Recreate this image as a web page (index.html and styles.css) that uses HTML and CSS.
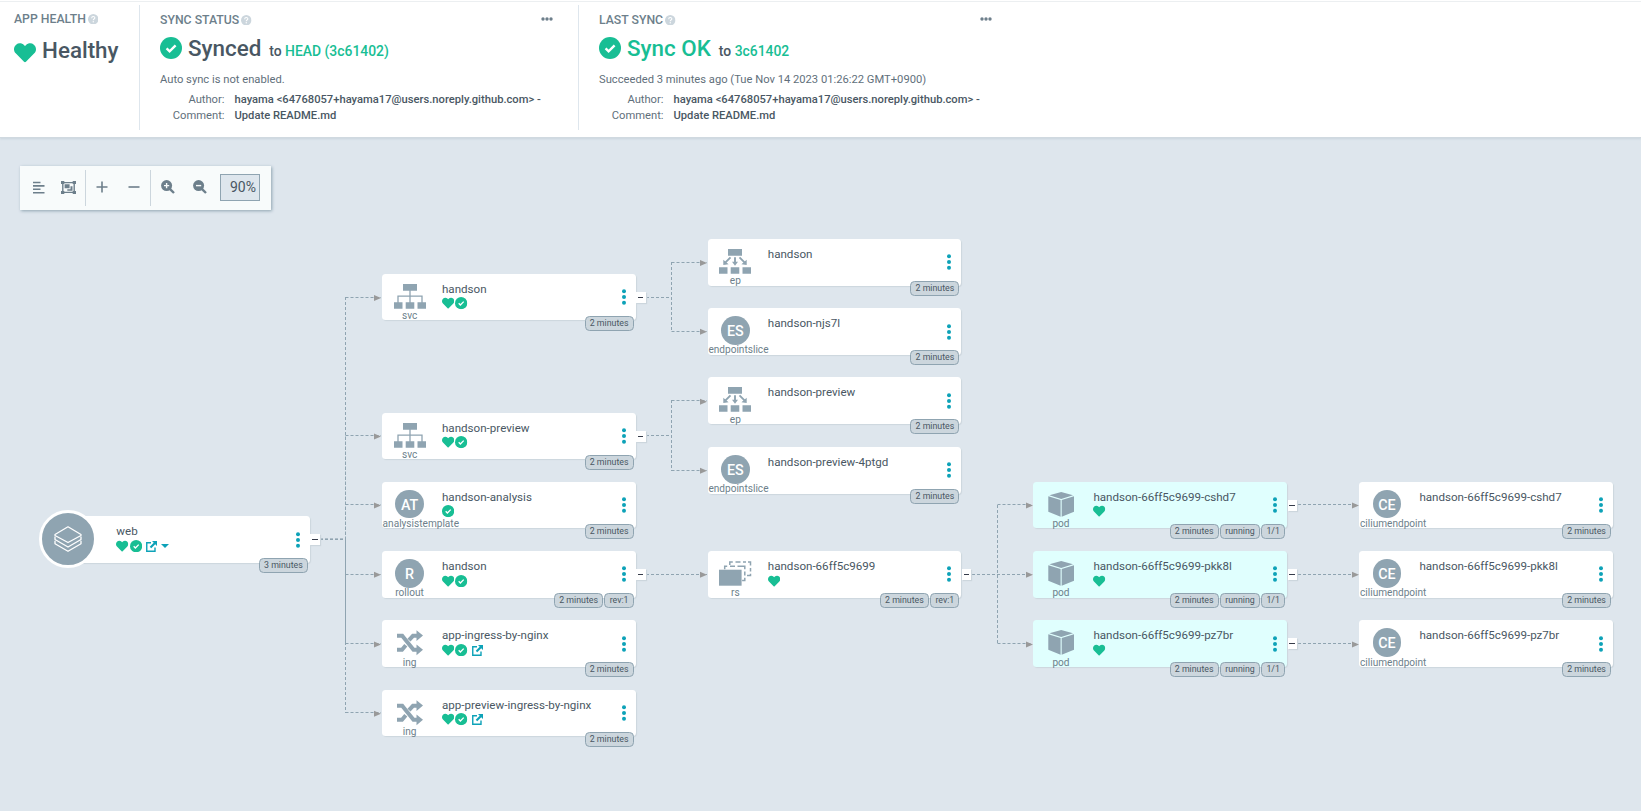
FILE: index.html
```html
<!DOCTYPE html>
<html lang="en">
<head>
<meta charset="utf-8">
<title>web - Application</title>
<link rel="stylesheet" href="styles.css">
</head>
<body>
<svg class="sprite" aria-hidden="true">
  <symbol id="heart" viewBox="0 0 512 512" preserveAspectRatio="none"><path d="M462.3 62.6C407.5 15.9 326 24.3 275.7 76.2L256 96.5l-19.7-20.3C186.1 24.3 104.5 15.9 49.7 62.6c-62.8 53.6-66.1 149.8-9.9 207.9l193.5 199.8c12.5 12.9 32.8 12.9 45.3 0l193.5-199.8c56.3-58.1 53-154.3-9.8-207.9z"/></symbol>
  <symbol id="check" viewBox="0 0 22 22"><circle cx="11" cy="11" r="11"/><path d="M6.6 11.3l3 3 6-6" fill="none" stroke="#fff" stroke-width="2.4"/></symbol>
  <symbol id="link" viewBox="0 0 22 22"><path d="M10 3.500H1.500V20.500H18V13" fill="none" stroke="currentColor" stroke-width="2.800"/><path d="M12 0h10v10l-3.500-3.500-8 8-3-3 8-8z" fill="currentColor"/></symbol>
  <symbol id="help" viewBox="0 0 20 20"><circle cx="10" cy="10" r="10" fill="#ccd6dd"/><path d="M7 8c0-4 6-4 6-.6 0 2.200-3 2.200-3 4.300" fill="none" stroke="#fff" stroke-width="2"/><circle cx="10" cy="14.800" r="1.300" fill="#fff"/></symbol>
  <symbol id="more" viewBox="0 0 12 4"><circle cx="2" cy="2" r="1.700"/><circle cx="6" cy="2" r="1.700"/><circle cx="10" cy="2" r="1.700"/></symbol>
  <symbol id="kebab" viewBox="0 0 4 16"><circle cx="2" cy="2.300" r="2"/><circle cx="2" cy="8" r="2"/><circle cx="2" cy="13.700" r="2"/></symbol>
  <symbol id="svc" viewBox="0 0 36 30"><path d="M11 2h14v6.700H11zM2 20.200h8.500v6.500H2zM13.700 20.200h8.600v6.500h-8.600zM25.500 20.200H34v6.500h-8.500z"/><path d="M18 8v13M6 21v-6.800h24V21" fill="none" stroke="#8fa4b1" stroke-width="1.300"/></symbol>
  <symbol id="ep" viewBox="0 0 36 30"><path d="M11 2h14v6.700H11zM2 20.200h8.500v6.500H2zM13.700 20.200h8.600v6.500h-8.600zM25.500 20.200H34v6.500h-8.500z"/><path d="M13.500 10.300L8.500 15.300M18 10.300v5M22.500 10.300l5 5" fill="none" stroke="#8fa4b1" stroke-width="1.900"/><path d="M6.300 18v-5.300l5.300 4.500zM15 14.800h6l-3 4zM29.700 18v-5.300l-5.300 4.500z"/></symbol>
  <symbol id="rs" viewBox="0 0 36 30"><path d="M2 10.700h22.600v16H2z"/><path d="M7.700 10.200V7.300h2.500M13 7.300h5M20.500 7.300h7.300v3M27.800 12.500v4M27.800 18.800v2.600h-2.700M12.800 6V3h3M18.500 3h5M26 3h3M31 3h2.500v3.500M33.500 9v3.500M33.500 14.800v1.800h-3.500" fill="none" stroke="#8fa4b1" stroke-width="1.500"/></symbol>
  <symbol id="pod" viewBox="0 0 36 30"><path d="M18.200 2L30 5.200 18.200 8.900 6.400 5.200zM5.300 6.300l12.300 3.800v16.600L5.300 21.800zM31 6.300l-12.300 3.800v16.600L31 21.800z"/></symbol>
  <symbol id="ing" viewBox="0 0 36 30"><path d="M5 7.800h5.200L21.500 21.800H25M5 21.800h5l3.800-4.500M17 12.200l4-4.400h4" fill="none" stroke="#8fa4b1" stroke-width="4"/><path d="M24.500 2.200l6.500 5.400-6.500 5.400zM24.500 16.400l6.500 5.400-6.500 5.400z"/></symbol>
  <symbol id="layers" viewBox="0 0 28 26"><g fill="none" stroke="#fff" stroke-width="1.300" stroke-linejoin="round"><path d="M14 .8L27 8.500v1L14 16.500 1 9.500v-1z"/><path d="M1 10.500v3L14 21l13-7.500v-3M1 14.800v3L14 25.300l13-7.500v-3"/></g></symbol>
</svg>

<header class="status">
  <section class="panel panel-health">
    <div class="title">APP HEALTH<svg class="help"><use href="#help"/></svg></div>
    <div class="value value-health"><svg class="big-heart green"><use href="#heart"/></svg><span>Healthy</span></div>
  </section>
  <section class="panel panel-sync">
    <div class="title">SYNC STATUS<svg class="help"><use href="#help"/></svg><svg class="more"><use href="#more"/></svg></div>
    <div class="value"><svg class="big-check green"><use href="#check"/></svg><span>Synced</span><span class="to">to <b>HEAD (3c61402)</b></span></div>
    <div class="note">Auto sync is not enabled.</div>
    <dl class="meta"><dt>Author:</dt><dd>hayama &lt;64768057+hayama17@users.noreply.github.com&gt; -</dd><dt>Comment:</dt><dd>Update README.md</dd></dl>
  </section>
  <section class="panel panel-last">
    <div class="title">LAST SYNC<svg class="help"><use href="#help"/></svg><svg class="more"><use href="#more"/></svg></div>
    <div class="value"><svg class="big-check green"><use href="#check"/></svg><span class="ok">Sync OK</span><span class="to">to <b>3c61402</b></span></div>
    <div class="note">Succeeded 3 minutes ago (Tue Nov 14 2023 01:26:22 GMT+0900)</div>
    <dl class="meta"><dt>Author:</dt><dd>hayama &lt;64768057+hayama17@users.noreply.github.com&gt; -</dd><dt>Comment:</dt><dd>Update README.md</dd></dl>
  </section>
</header>

<main class="canvas">
  <div class="toolbar">
    <div class="group g1">
      <svg width="12" height="13" viewBox="0 0 12 13"><path d="M0 1.500h7.500M0 4.900h11.500M0 8.300h7.500M0 11.700h11.500" stroke="currentColor" stroke-width="1.600"/></svg>
      <svg width="15" height="13" viewBox="0 0 15 13"><path d="M1.800 1.600h11.400v9.800H1.800z" fill="none" stroke="currentColor" stroke-width="1.400"/><path d="M0 0h3.300v3H0zM11.700 0H15v3h-3.300zM0 10h3.300v3H0zM11.700 10H15v3h-3.300zM3.600 3.300h5v4h-5zM9.500 5.300h2v4.400H6.300V8.200h3.200z" fill="currentColor"/></svg>
    </div>
    <div class="group g2">
      <svg width="12" height="12" viewBox="0 0 12 12"><path d="M.5 6h11M6 .5v11" stroke="currentColor" stroke-width="1.600"/></svg>
      <svg width="12" height="12" viewBox="0 0 12 12"><path d="M.5 6h11" stroke="currentColor" stroke-width="1.600"/></svg>
    </div>
    <div class="group g3">
      <svg width="14" height="14" viewBox="0 0 14 14"><circle cx="5.600" cy="5.600" r="5.500" fill="currentColor"/><path d="M8.800 8.800l4.200 4.200" stroke="currentColor" stroke-width="2.400"/><path d="M5.600 3v5.200M3 5.600h5.200" stroke="#f8fbfb" stroke-width="1.400"/></svg>
      <svg width="14" height="14" viewBox="0 0 14 14"><circle cx="5.600" cy="5.600" r="5.500" fill="currentColor"/><path d="M8.800 8.800l4.200 4.200" stroke="currentColor" stroke-width="2.400"/><path d="M3 5.600h5.200" stroke="#f8fbfb" stroke-width="1.400"/></svg>
      <span class="zoom">90%</span>
    </div>
  </div>

  <svg class="edges" width="1641" height="811" viewBox="0 0 1641 811">
    <g class="lines">
      <path d="M320 539.500H345.500M345.500 297V713"/>
      <path d="M345.500 539.500V436"/>
      <path d="M345.500 539.500V643"/>
      <path d="M320 538.900H345.500"/>
      <path d="M345.500 297.500H381M345.500 435.500H381M345.500 504.500H381M345.500 574.500H381M345.500 643.500H381M345.500 712.500H381"/>
      <path d="M646 297.500H671.500M671.500 262V332M671.500 262.500H707M671.500 331.500H707"/>
      <path d="M646 435.500H671.500M671.500 400V471M671.500 400.500H707M671.500 470.500H707"/>
      <path d="M646 574.500H707"/>
      <path d="M972 574.500H1032M997.500 505V644M997.500 504.500H1032M997.500 643.500H1032"/>
      <path d="M1298 504.500H1358M1298 574.500H1358M1298 643.500H1358"/>
    </g>
    <path class="heads" d="M374 295l7 3-7 3zM374 433.500l7 3-7 3zM374 502.500l7 3-7 3zM374 571.700l7 3-7 3zM374 641.500l7 3-7 3zM374 710.700l7 3-7 3zM700 260l7 3-7 3zM700 328.700l7 3-7 3zM700 398.700l7 3-7 3zM700 467.700l7 3-7 3zM700 571.700l7 3-7 3zM1026 502.500l7 3-7 3zM1026 571.700l7 3-7 3zM1026 641.500l7 3-7 3zM1352 502.500l7 3-7 3zM1352 571.700l7 3-7 3zM1352 641.500l7 3-7 3z"/>
  </svg>

  <article class="node root" style="left:56.2px;top:516.2px">
    <div class="kind"><span class="disc"><svg width="28" height="26"><use href="#layers"/></svg></span></div>
    <div class="info"><div class="name">web</div><div class="marks"><svg><use href="#heart"/></svg><svg><use href="#check"/></svg><svg class="link"><use href="#link"/></svg><i class="caret"></i></div></div>
    <svg class="kebab"><use href="#kebab"/></svg><div class="tags"><span>3 minutes</span></div><i class="fold"></i>
  </article>

  <article class="node" style="left:381.9px;top:273.7px">
    <div class="kind"><svg><use href="#svc"/></svg><small>svc</small></div>
    <div class="info"><div class="name">handson</div><div class="marks"><svg><use href="#heart"/></svg><svg><use href="#check"/></svg></div></div>
    <svg class="kebab"><use href="#kebab"/></svg><div class="tags"><span>2 minutes</span></div><i class="fold"></i>
  </article>
  <article class="node" style="left:381.9px;top:412.5px">
    <div class="kind"><svg><use href="#svc"/></svg><small>svc</small></div>
    <div class="info"><div class="name">handson-preview</div><div class="marks"><svg><use href="#heart"/></svg><svg><use href="#check"/></svg></div></div>
    <svg class="kebab"><use href="#kebab"/></svg><div class="tags"><span>2 minutes</span></div><i class="fold"></i>
  </article>
  <article class="node" style="left:381.9px;top:481.6px">
    <div class="kind"><b>AT</b><small>analysistemplate</small></div>
    <div class="info"><div class="name">handson-analysis</div><div class="marks"><svg><use href="#check"/></svg></div></div>
    <svg class="kebab"><use href="#kebab"/></svg><div class="tags"><span>2 minutes</span></div>
  </article>
  <article class="node" style="left:381.9px;top:550.9px">
    <div class="kind"><b>R</b><small>rollout</small></div>
    <div class="info"><div class="name">handson</div><div class="marks"><svg><use href="#heart"/></svg><svg><use href="#check"/></svg></div></div>
    <svg class="kebab"><use href="#kebab"/></svg><div class="tags"><span>2 minutes</span><span>rev:1</span></div><i class="fold"></i>
  </article>
  <article class="node" style="left:381.9px;top:620.4px">
    <div class="kind"><svg><use href="#ing"/></svg><small>ing</small></div>
    <div class="info"><div class="name">app-ingress-by-nginx</div><div class="marks"><svg><use href="#heart"/></svg><svg><use href="#check"/></svg><svg class="link"><use href="#link"/></svg></div></div>
    <svg class="kebab"><use href="#kebab"/></svg><div class="tags"><span>2 minutes</span></div>
  </article>
  <article class="node" style="left:381.9px;top:689.5px">
    <div class="kind"><svg><use href="#ing"/></svg><small>ing</small></div>
    <div class="info"><div class="name">app-preview-ingress-by-nginx</div><div class="marks"><svg><use href="#heart"/></svg><svg><use href="#check"/></svg><svg class="link"><use href="#link"/></svg></div></div>
    <svg class="kebab"><use href="#kebab"/></svg><div class="tags"><span>2 minutes</span></div>
  </article>

  <article class="node" style="left:707.7px;top:239px">
    <div class="kind"><svg><use href="#ep"/></svg><small>ep</small></div>
    <div class="info"><div class="name">handson</div></div>
    <svg class="kebab"><use href="#kebab"/></svg><div class="tags"><span>2 minutes</span></div>
  </article>
  <article class="node" style="left:707.7px;top:308.3px">
    <div class="kind"><b>ES</b><small>endpointslice</small></div>
    <div class="info"><div class="name">handson-njs7l</div></div>
    <svg class="kebab"><use href="#kebab"/></svg><div class="tags"><span>2 minutes</span></div>
  </article>
  <article class="node" style="left:707.7px;top:377.4px">
    <div class="kind"><svg><use href="#ep"/></svg><small>ep</small></div>
    <div class="info"><div class="name">handson-preview</div></div>
    <svg class="kebab"><use href="#kebab"/></svg><div class="tags"><span>2 minutes</span></div>
  </article>
  <article class="node" style="left:707.7px;top:446.9px">
    <div class="kind"><b>ES</b><small>endpointslice</small></div>
    <div class="info"><div class="name">handson-preview-4ptgd</div></div>
    <svg class="kebab"><use href="#kebab"/></svg><div class="tags"><span>2 minutes</span></div>
  </article>
  <article class="node" style="left:707.7px;top:550.9px">
    <div class="kind"><svg><use href="#rs"/></svg><small>rs</small></div>
    <div class="info"><div class="name">handson-66ff5c9699</div><div class="marks"><svg><use href="#heart"/></svg></div></div>
    <svg class="kebab"><use href="#kebab"/></svg><div class="tags"><span>2 minutes</span><span>rev:1</span></div><i class="fold"></i>
  </article>

  <article class="node pod" style="left:1033.3px;top:481.6px">
    <div class="kind"><svg><use href="#pod"/></svg><small>pod</small></div>
    <div class="info"><div class="name">handson-66ff5c9699-cshd7</div><div class="marks"><svg><use href="#heart"/></svg></div></div>
    <svg class="kebab"><use href="#kebab"/></svg><div class="tags"><span>2 minutes</span><span>running</span><span>1/1</span></div><i class="fold"></i>
  </article>
  <article class="node pod" style="left:1033.3px;top:550.9px">
    <div class="kind"><svg><use href="#pod"/></svg><small>pod</small></div>
    <div class="info"><div class="name">handson-66ff5c9699-pkk8l</div><div class="marks"><svg><use href="#heart"/></svg></div></div>
    <svg class="kebab"><use href="#kebab"/></svg><div class="tags"><span>2 minutes</span><span>running</span><span>1/1</span></div><i class="fold"></i>
  </article>
  <article class="node pod" style="left:1033.3px;top:620.4px">
    <div class="kind"><svg><use href="#pod"/></svg><small>pod</small></div>
    <div class="info"><div class="name">handson-66ff5c9699-pz7br</div><div class="marks"><svg><use href="#heart"/></svg></div></div>
    <svg class="kebab"><use href="#kebab"/></svg><div class="tags"><span>2 minutes</span><span>running</span><span>1/1</span></div><i class="fold"></i>
  </article>

  <article class="node" style="left:1359.3px;top:481.6px">
    <div class="kind"><b>CE</b><small>ciliumendpoint</small></div>
    <div class="info"><div class="name">handson-66ff5c9699-cshd7</div></div>
    <svg class="kebab"><use href="#kebab"/></svg><div class="tags"><span>2 minutes</span></div>
  </article>
  <article class="node" style="left:1359.3px;top:550.9px">
    <div class="kind"><b>CE</b><small>ciliumendpoint</small></div>
    <div class="info"><div class="name">handson-66ff5c9699-pkk8l</div></div>
    <svg class="kebab"><use href="#kebab"/></svg><div class="tags"><span>2 minutes</span></div>
  </article>
  <article class="node" style="left:1359.3px;top:620.4px">
    <div class="kind"><b>CE</b><small>ciliumendpoint</small></div>
    <div class="info"><div class="name">handson-66ff5c9699-pz7br</div></div>
    <svg class="kebab"><use href="#kebab"/></svg><div class="tags"><span>2 minutes</span></div>
  </article>
</main>
</body>
</html>
```
FILE: styles.css
```css
* { box-sizing: border-box; }
body {
  margin: 0;
  height: 811px;
  position: relative;
  overflow: hidden;
  background: #dee6ed;
  color: #495763;
  font-family: Roboto, "Liberation Sans", sans-serif;
}
svg { display: block; flex: none; }
.sprite { position: absolute; width: 0; height: 0; }

/* status header */
.status {
  display: flex;
  height: 138px;
  padding-top: 5px;
  background: #fff;
  border-bottom: 1px solid #d0d9e0;
  box-shadow: 0 1px 2px rgba(120, 140, 155, .2), inset 0 1px 0 #fff, inset 0 2px 0 #eceff1;
}
.panel { height: 125px; border-right: 1px solid #dee6ed; }
.panel-health { width: 140px; padding: 6px 0 0 14px; }
.panel-sync { width: 439px; padding: 7px 25.500px 0 20px; }
.panel-last { width: 439px; padding: 7px 26px 0 20px; border-right: 0; }
.title {
  display: flex;
  align-items: center;
  height: 16px;
  font-size: 12.250px;
  font-weight: 500;
  color: #6d7f8b;
}
.help { width: 10.500px; height: 10.500px; margin-left: 2px; }
.more { width: 12px; height: 4px; margin: -3px 0 0 auto; fill: #6d7f8b; }
.green { fill: #18be94; }
.value {
  display: flex;
  align-items: baseline;
  height: 30px;
  margin-top: 6px;
  font-size: 22.400px;
  font-weight: 500;
  line-height: 28px;
}
.value-health { margin-top: 9px; }
.big-heart { width: 22px; height: 21.500px; margin-right: 6px; position: relative; top: 5px; }
.big-check { width: 22px; height: 22px; margin-right: 6px; position: relative; top: 3px; }
.to { margin-left: 8px; font-size: 13.900px; }
.to b, .ok { color: #18be94; font-weight: 500; }
.note { margin-top: 9px; font-size: 11.200px; line-height: 14px; color: #5f6f7b; height: 14px; }
.meta {
  display: grid;
  grid-template-columns: 64.500px auto;
  column-gap: 10px;
  margin: 4.500px 0 0;
  font-size: 11.200px;
  line-height: 16px;
  white-space: nowrap;
}
.meta dt { text-align: right; color: #5f6f7b; }
.meta dd { margin: 0; font-weight: 500; }

/* toolbar */
.canvas { padding: 28px 0 0 20px; }
.toolbar {
  display: flex;
  width: 251px;
  height: 44px;
  padding: 4px 0;
  background: #f8fbfb;
  color: #6d7f8b;
  box-shadow: 1px 1px 3px #8fa4b1;
}
.group { display: flex; align-items: center; padding-bottom: 1.500px; border-right: 1px solid #ccd6dd; }
.g1 { width: 66px; padding-left: 13px; gap: 15.500px; }
.g2 { width: 65px; padding-left: 10px; gap: 20px; }
.g3 { padding-left: 9.500px; gap: 18.500px; border: 0; }
.zoom {
  width: 40px;
  height: 27px;
  margin-left: -5.500px;
  padding-right: 3px;
  border: 1px solid #8fa4b1;
  background: #dee6ed;
  color: #495763;
  font-size: 14px;
  line-height: 25px;
  text-align: right;
}

/* resource graph */
.edges { position: absolute; left: 0; top: 0; }
.lines { fill: none; stroke: #8fa4b1; stroke-width: 1; stroke-dasharray: 3 2; }
.heads { fill: #999; }
.node {
  position: absolute;
  display: flex;
  width: 253.800px;
  height: 46.800px;
  border-radius: 3.500px;
  background: #fff;
  box-shadow: 1px 1px 1px #ccd6dd;
}
.pod { background: #e0fffe; }
.kind {
  display: flex;
  flex-direction: column;
  align-items: center;
  width: 55.400px;
  padding-top: 8px;
}
.kind svg { width: 36px; height: 30px; margin-bottom: -1.900px; fill: #8fa4b1; }
.kind b {
  width: 28.800px;
  height: 28.800px;
  margin-bottom: -.700px;
  border-radius: 50%;
  background: #8fa4b1;
  color: #fff;
  font-size: 14.300px;
  font-weight: 500;
  line-height: 30px;
  text-align: center;
}
.kind small {
  max-width: 54px;
  font-size: 10.100px;
  line-height: 12px;
  white-space: nowrap;
  color: #6d7f8b;
}
.info { flex: 1; padding: 8px 0 0 4.700px; }
.name { font-size: 11.600px; line-height: 14px; color: #495763; white-space: nowrap; }
.marks { display: flex; align-items: center; gap: 1.200px; margin-top: 1.900px; height: 12px; fill: #18be94; }
.marks svg { width: 12.300px; height: 12.300px; }
.marks .link { width: 11px; height: 11px; margin-left: 3px; color: #0da2b8; }
.caret { margin-left: 3px; border: 4px solid transparent; border-top-color: #0da2b8; border-bottom: 0; }
.kebab { width: 4px; height: 16px; margin: 15.400px 10px 0 0; fill: #0da2b8; }
.tags { position: absolute; right: 2px; top: 42px; display: flex; gap: 1.300px; }
.tags span {
  height: 15px;
  padding: 0 4.200px;
  border: 1px solid #8fa4b1;
  border-radius: 4.500px;
  background: #ccd6dd;
  font-size: 8.800px;
  line-height: 13px;
  white-space: nowrap;
}
.fold { position: absolute; right: -10px; top: 18px; width: 9.500px; height: 11px; background: #fff; box-shadow: 1px 1px 1px #ccd6dd; }
.fold::after { content: ""; display: block; width: 5.500px; height: 1px; margin: 5px 0 0 1.800px; background: #363c4a; }
.disc {
  display: flex;
  flex: none;
  align-items: center;
  justify-content: center;
  width: 58px;
  height: 58px;
  margin: -14px 0 0 -32px;
  border: 3px solid #fff;
  border-radius: 50%;
  background: #8fa4b1;
}
.root .disc svg { width: 28px; height: 26px; margin: 0; }
```
